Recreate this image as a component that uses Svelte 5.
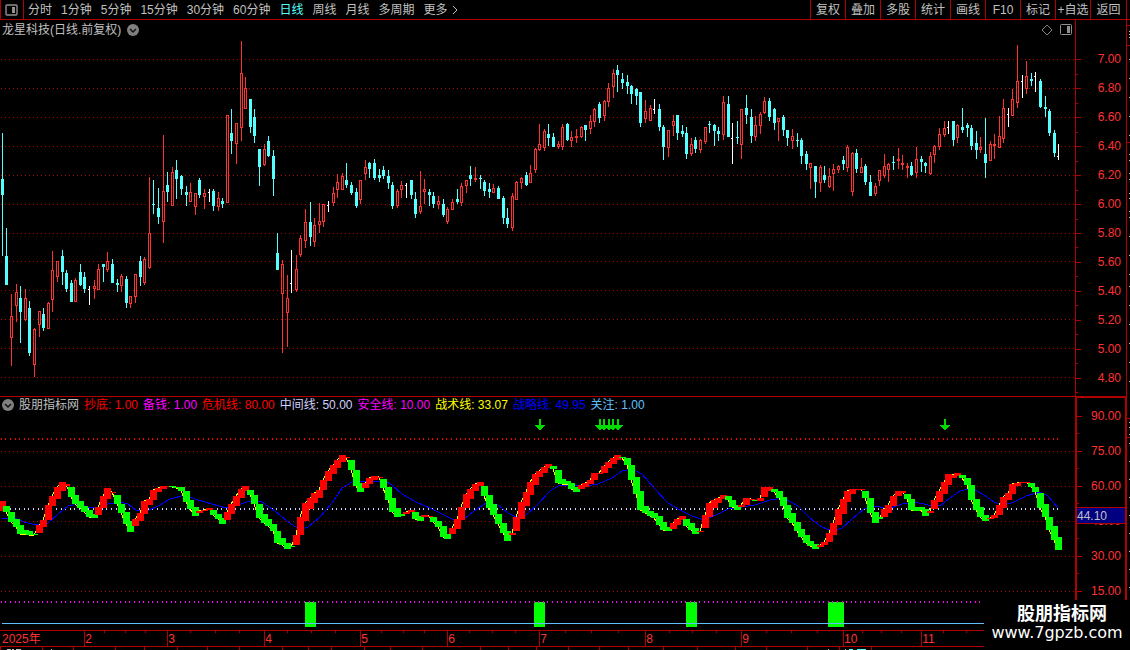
<script lang="ts">
  const PERIODS = ['分时', '1分钟', '5分钟', '15分钟', '30分钟', '60分钟', '日线', '周线', '月线', '多周期', '更多']
  const ACTIONS = ['复权', '叠加', '多股', '统计', '画线', 'F10', '标记', '+自选', '返回']

  let period = $state('日线')

  const PRICES = ['7.00', '6.80', '6.60', '6.40', '6.20', '6.00', '5.80', '5.60', '5.40', '5.20', '5.00', '4.80']
  const LEVELS = ['90.00', '75.00', '60.00', '45.00', '30.00', '15.00']

  const LEGEND = [
    { name: '抄底', value: '1.00', color: 'red' },
    { name: '备钱', value: '1.00', color: 'magenta' },
    { name: '危机线', value: '80.00', color: 'red' },
    { name: '中间线', value: '50.00', color: 'pale' },
    { name: '安全线', value: '10.00', color: 'magenta' },
    { name: '战术线', value: '33.07', color: 'yellow' },
    { name: '战略线', value: '49.95', color: 'blue' },
    { name: '关注', value: '1.00', color: 'sky' },
  ]

  const PRICE_GRID = [59, 88, 117, 146, 175, 204, 233, 261, 290, 319, 348, 377]
  const LEVEL_GRID = [451, 486, 521, 556, 591]

  // x, high, body top, body bottom, low, kind (r up, c down, w flat)
  const CANDLES = `
    2 133 179 195 256 c|6 228 256 285 285 c|11 294 316 338 366 r|16 284 292 306 322 r|20 286 298 312 343 c
    25 289 298 320 321 r|29 301 308 353 356 c|34 328 329 365 377 r|39 311 311 325 337 r|43 308 314 328 331 c
    48 302 303 329 329 r|52 251 270 300 312 r|57 261 261 277 282 r|62 250 256 272 285 c|66 270 273 289 292 c
    71 280 283 302 302 c|75 278 280 302 302 r|80 264 272 285 286 c|84 272 277 289 293 c|89 286 289 290 305 w
    94 280 286 289 299 r|98 264 269 290 290 r|103 264 264 267 282 c|107 252 261 270 272 r|112 259 264 283 283 c
    117 279 283 285 292 c|121 274 276 286 292 r|126 276 279 303 308 c|130 296 296 304 308 r|135 274 274 297 303 r
    140 256 261 277 286 c|144 257 259 283 285 r|149 177 233 268 269 r|153 180 204 205 214 c|158 188 208 217 224 c
    163 135 191 222 243 r|167 172 185 192 202 c|172 167 172 206 206 r|176 160 170 179 199 c|181 175 176 189 195 c
    186 186 192 195 206 c|190 183 192 202 202 r|195 193 193 207 215 r|199 178 180 195 198 c|204 189 193 197 209 r
    209 189 192 193 202 w|213 189 191 206 211 c|218 192 198 207 211 r|222 198 201 204 208 c|227 115 115 203 203 r
    231 109 133 141 154 c|236 123 123 144 164 r|241 41 73 128 141 r|245 77 88 109 109 r|250 99 99 127 133 c
    254 109 117 136 143 c|259 149 149 167 186 c|264 144 149 165 166 r|268 136 141 156 157 c|273 150 156 179 196 c
    277 233 253 270 270 c|282 260 264 294 353 r|287 275 298 313 347 r|291 250 283 284 293 w|296 255 269 290 292 r
    300 235 238 255 257 r|305 209 222 241 248 r|310 202 222 237 246 c|314 218 225 242 247 r|319 203 221 225 233 r
    323 204 204 222 227 r|328 201 205 206 212 w|333 187 193 203 206 r|337 174 182 190 198 r|342 173 176 190 190 r
    346 163 180 185 188 c|351 182 185 193 195 c|356 188 192 206 208 c|360 180 180 200 204 r|365 160 167 174 180 r
    369 162 163 169 178 c|374 159 163 178 180 c|379 169 175 178 182 c|383 166 170 176 179 c|388 170 176 183 189 c
    392 182 185 206 209 c|397 189 191 206 208 r|401 181 185 190 198 r|406 183 185 186 198 w|411 180 180 195 199 c
    415 192 199 214 218 c|420 171 206 212 214 r|424 179 189 192 204 r|429 189 192 195 206 c|433 192 196 204 208 c
    438 196 201 205 209 r|443 199 204 215 217 c|447 207 209 222 224 r|452 199 202 210 210 r|457 189 199 202 204 c
    461 183 186 203 206 r|466 180 180 186 193 r|470 166 175 179 186 c|475 167 178 180 182 r|480 175 178 179 189 c
    484 180 182 191 196 c|489 183 189 192 198 c|493 184 188 193 193 r|498 186 188 199 199 c|503 196 198 218 224 c
    507 208 218 224 228 c|512 193 196 228 231 r|516 181 182 200 200 r|521 177 178 183 189 r|526 172 175 185 186 c
    530 165 173 183 183 r|535 148 149 170 173 r|539 124 144 150 151 r|544 129 131 148 151 r|548 124 134 138 146 c
    553 133 137 147 147 c|558 141 144 147 149 r|562 124 127 147 150 r|567 123 124 140 141 c|571 131 137 141 147 r
    576 129 136 138 143 r|581 126 127 137 138 r|585 125 125 130 141 c|590 115 121 129 134 r|594 108 109 122 127 r
    599 102 104 118 123 c|604 100 101 116 121 r|608 83 88 102 107 r|613 69 73 87 98 r|617 65 70 75 92 c
    622 73 79 83 89 c|627 75 82 86 94 c|631 85 86 94 104 c|636 88 89 96 105 c|640 92 92 123 127 c
    645 100 111 119 123 r|650 105 108 121 121 r|654 99 109 110 114 w|659 104 109 127 131 c|663 125 127 147 160 c
    668 130 130 148 157 r|673 115 121 126 136 r|677 115 115 133 140 c|682 125 131 134 137 c|686 127 133 154 159 c
    691 138 144 154 156 r|695 137 140 149 153 c|700 139 140 150 153 r|705 127 127 142 144 r|709 121 124 125 133 c
    714 124 125 131 146 c|718 127 131 134 141 c|723 96 102 135 140 r|728 96 104 137 137 c|732 123 138 139 164 w
    737 121 137 138 144 c|741 109 109 145 159 r|746 95 108 115 124 c|751 109 117 136 143 c|755 116 125 137 141 r
    760 112 114 126 134 r|764 97 101 113 114 r|769 98 101 117 121 c|774 108 109 123 130 c|778 118 118 122 141 r
    783 115 117 130 136 c|787 130 130 138 146 c|792 129 136 141 149 r|797 133 140 141 147 c|801 138 140 156 164 c
    806 151 154 164 170 c|810 163 163 168 189 r|815 166 166 182 198 c|820 165 167 183 192 r|824 166 175 180 183 c
    829 168 176 187 188 r|833 164 169 174 191 r|838 165 166 170 173 r|843 156 160 164 170 c|847 145 147 168 172 r
    852 152 153 192 196 r|856 149 153 169 173 c|861 158 167 173 173 r|865 164 166 182 185 c|870 175 182 196 196 c
    875 183 186 194 196 r|879 170 170 181 186 r|884 154 166 176 178 r|888 163 164 170 182 r|893 156 162 163 170 c
    898 148 159 161 169 r|902 155 163 165 170 r|907 163 166 168 178 r|911 162 166 175 176 c|916 147 159 173 178 r
    921 156 159 162 172 c|925 162 163 166 173 c|930 152 156 174 175 r|934 145 146 155 163 r|939 128 134 147 150 r
    944 121 128 135 137 r|948 121 127 128 134 w|953 121 121 140 146 c|957 124 125 138 143 r|962 108 127 130 133 c
    967 123 125 128 137 c|971 125 128 146 150 c|976 131 143 150 159 c|980 137 147 150 153 r|985 118 154 163 178 c
    990 141 144 161 161 r|994 134 144 146 159 r|999 116 136 148 148 r|1003 99 108 139 143 r|1008 108 114 115 127 w
    1012 89 99 116 116 r|1017 45 81 103 108 r|1022 75 81 82 98 w|1026 61 76 89 94 r|1031 73 79 81 86 c
    1035 72 76 77 92 w|1040 79 81 107 108 c|1045 96 107 109 117 c|1049 109 111 133 136 c|1054 130 133 153 157 c
    1058 144 156 157 160 w`
    .trim()
    .split(/[|\n]/)
    .map((row) => {
      const parts = row.trim().split(' ')
      const [x, high, top, bottom, low] = parts.map(Number)
      return { x, high, top, bottom, low, kind: parts[5] }
    })

  // x, start, end of each oscillator step
  const STEPS = `
    2 511 501|6 506 512|11 512 522|16 519 527|20 525 534|25 530 534|29 531 535|34 534 535|39 533 525|43 527 520
    48 520 505|52 506 496|57 499 487|62 491 482|66 486 484|71 487 497|75 495 504|80 501 508|84 506 512|89 510 517
    94 514 518|98 515 507|103 508 496|107 499 488|112 493 492|117 495 504|121 504 513|126 512 524|130 521 532|135 526 519
    140 521 513|144 514 501|149 505 499|153 500 490|158 492 488|163 489 486|167 487 486|172 486 487|176 487 488|181 487 491
    186 491 502|190 500 509|195 507 516|199 513 511|204 511 510|209 510 508|213 510 515|218 514 519|222 518 524|227 520 512
    231 514 504|236 506 496|241 498 489|245 491 486|250 490 495|254 495 504|259 504 518|264 514 523|268 519 526|273 524 531
    277 531 543|282 538 545|287 543 549|291 546 547|296 545 535|300 535 517|305 521 503|310 509 498|314 503 493|319 498 490
    323 490 480|328 481 471|333 474 465|337 468 460|342 462 455|346 458 457|351 460 470|356 470 486|360 483 492|365 488 483
    369 484 478|374 480 476|379 478 477|383 479 488|388 487 500|392 498 512|397 508 517|401 514 516|406 514 512|411 512 510
    415 512 519|420 516 521|424 517 515|429 517 516|433 517 522|438 521 527|443 526 537|447 534 539|452 534 528|457 529 519
    461 520 507|466 508 494|470 499 489|475 491 484|480 486 482|484 486 496|489 495 508|493 504 515|498 514 524|503 523 533
    507 531 541|512 535 533|516 531 517|521 519 502|526 506 492|530 495 482|535 485 474|539 477 471|544 473 467|548 468 464
    553 466 469|558 470 483|562 479 484|567 481 484|571 483 489|576 487 492|581 489 485|585 487 483|590 484 480|594 480 473
    599 474 473|604 473 466|608 468 462|613 464 458|617 460 455|622 457 458|627 458 465|631 465 480|636 477 494|640 491 510
    645 506 513|650 511 516|654 513 518|659 516 525|663 522 530|668 527 531|673 529 523|677 525 519|682 520 516|686 519 526
    691 523 530|695 528 534|700 532 531|705 528 515|709 517 503|714 508 500|718 503 498|723 499 495|728 496 500|732 500 507
    737 505 510|741 507 505|746 505 498|751 500 499|755 500 501|760 501 498|764 497 487|769 491 487|774 489 492|779 491 498
    783 497 506|787 505 518|792 513 523|797 522 531|801 529 537|806 535 543|810 541 546|815 544 549|820 547 545|824 545 542
    829 542 533|833 535 523|838 525 509|843 514 499|847 502 491|852 494 489|856 490 489|861 490 489|865 491 498|870 498 513
    875 512 523|879 517 519|884 517 509|888 513 505|893 506 496|898 496 491|902 493 491|907 494 499|911 499 510|916 507 511
    921 507 510|925 509 516|930 513 511|934 509 500|939 502 491|944 494 482|948 485 474|953 478 475|957 476 473|962 475 478
    967 478 485|971 485 500|976 499 510|980 507 517|985 515 521|990 519 518|994 518 515|999 515 505|1003 508 497|1008 500 493
    1012 494 484|1017 486 483|1022 483 482|1026 483 482|1031 483 487|1035 487 492|1040 493 508|1045 504 517|1049 517 530|1054 526 540
    1058 537 550`
    .trim()
    .split(/[|\n]/)
    .map((row) => {
      const [x, from, to] = row.trim().split(' ').map(Number)
      return { x, from, to }
    })

  const TACTIC = STEPS.map((s) => `${s.x},${s.to}`).join(' ')
  const STRATEGY =
    '2,519 15,518 24,522 36,525 48,523 58,514 68,506 78,504 88,507 98,508 108,504 120,502 128,504 136,510 147,511 158,506 170,499 185,495 198,500 212,504 226,508 238,505 250,501 262,502 275,511 287,521 300,530 308,527 320,517 332,503 342,488 352,482 366,481 385,481 392,485 402,494 416,502 432,509 444,515 452,519 464,519 474,511 486,503 498,505 508,513 516,517 526,515 538,504 550,491 560,485 572,485 586,486 598,484 612,478 622,471 632,469 642,474 654,488 668,503 680,510 692,516 704,520 716,515 728,509 742,507 755,505 770,500 784,498 798,506 810,518 822,527 832,531 842,528 852,519 864,509 876,506 888,509 902,504 915,502 928,505 940,506 950,498 960,491 972,488 984,495 994,502 1004,505 1014,502 1026,496 1040,492 1048,496 1058,508'

  const ARROWS = [540, 600, 604, 609, 613, 618, 945]
  const SIGNALS = [
    { x: 305, w: 11 },
    { x: 534, w: 11 },
    { x: 686, w: 11 },
    { x: 828, w: 16 },
  ]

  const MONTHS = [
    { label: '2025年', width: 83 },
    { label: '2', width: 83 },
    { label: '3', width: 97 },
    { label: '4', width: 96 },
    { label: '5', width: 87 },
    { label: '6', width: 92 },
    { label: '7', width: 106 },
    { label: '8', width: 96 },
    { label: '9', width: 102 },
    { label: '10', width: 78 },
    { label: '11', width: 210 },
  ]
  const WEEKS = [104, 125, 145, 190, 215, 239, 287, 311, 335, 381, 403, 424, 469, 492, 515, 565, 591, 618, 669, 692, 716, 766, 791, 817, 862, 881, 901, 943, 966]
  const FOOT_TICKS = [0, 42, 73, 115, 144, 177, 207, 239, 282, 308, 331, 364, 390, 422, 480, 508, 536, 568, 599, 628, 663, 697, 735, 766, 807, 839, 871]

  // marks of the neighbouring pane that show at the right edge
  const EDGE_TOP = [31, 34, 37, 59, 78, 97, 116, 135, 154, 160, 173, 179, 193, 198, 211, 217, 236, 255, 274, 286, 305, 324, 343, 362, 381]
  const EDGE_BOTTOM = [422, 427, 434, 443, 461, 479, 497, 515, 533, 551, 569, 587]
</script>

<div class="terminal">
  <header class="toolbar">
    <button class="layout-btn" aria-label="布局">
      <svg width="14" height="12" viewBox="0 0 14 12">
        <rect x="1" y="1" width="11" height="10" rx="1" fill="none" stroke="#909090" stroke-width="1.4" />
        <rect x="7" y="3" width="3" height="6" fill="#909090" />
      </svg>
    </button>
    <nav class="periods">
      {#each PERIODS as name}
        <button class:active={name === period} onclick={() => (period = name)}>
          {name}{#if name === '更多'}<svg class="chevron" width="6" height="10" viewBox="0 0 6 10"><path d="M1 1 L5 5 L1 9" fill="none" stroke="#c0c0c0" /></svg>{/if}
        </button>
      {/each}
    </nav>
    <div class="actions">
      {#each ACTIONS as name}
        <button>{name}</button>
      {/each}
    </div>
  </header>

  <section class="panel price-panel">
    <div class="plot">
      <div class="title">
        <h1>龙星科技(日线.前复权)</h1>
        <button class="round" aria-label="展开">
          <svg width="12" height="12" viewBox="0 0 12 12">
            <circle cx="6" cy="6" r="6" fill="#808080" />
            <path d="M3 5 L6 8 L9 5" fill="none" stroke="#101010" stroke-width="1.5" />
          </svg>
        </button>
        <div class="tools">
          <button aria-label="标注">
            <svg width="12" height="12" viewBox="0 0 12 12">
              <path d="M6 1 L11 6 L6 11 L1 6 Z" fill="none" stroke="#808080" />
            </svg>
          </button>
          <button aria-label="侧栏">
            <svg width="12" height="12" viewBox="0 0 12 12">
              <rect x="0.5" y="0.5" width="11" height="10" rx="1" fill="none" stroke="#909090" />
              <rect x="7" y="2" width="3" height="7" fill="#909090" />
            </svg>
          </button>
        </div>
      </div>
      <svg class="chart" viewBox="0 40 1075 356" preserveAspectRatio="none" shape-rendering="crispEdges">
        {#each PRICE_GRID as y}
          <line class="grid" x1="1" x2="1075" y1={y + 0.5} y2={y + 0.5} />
        {/each}
        {#each CANDLES as { x, high, top, bottom, low, kind }}
          {#if kind === 'c'}
            <rect class="down" {x} y={high} width="1" height={low - high} />
            <rect class="down" x={x - 1} y={top} width="3" height={bottom - top} />
          {:else if kind === 'w'}
            <rect class="flat" {x} y={high} width="1" height={low - high} />
            <rect class="flat" x={x - 1} y={top} width="1" height="1" />
          {:else}
            <rect class="up" {x} y={high} width="1" height={top - high} />
            <rect class="up" {x} y={bottom} width="1" height={low - bottom} />
            <rect class="up" x={x - 1} y={top} width="3" height={bottom - top} />
            <rect class="hole" {x} y={top + 1} width="1" height={Math.max(0, bottom - top - 2)} />
          {/if}
        {/each}
      </svg>
    </div>
    <ol class="axis">
      {#each PRICES as label}
        <li>{label}</li>
      {/each}
    </ol>
    <svg class="edge" viewBox="0 20 3 376" preserveAspectRatio="none" shape-rendering="crispEdges">
      {#each [25, 45, 142] as y}
        <rect class="edge-line" x="0" {y} width="3" height="1" />
      {/each}
      {#each EDGE_TOP as y}
        <rect class="edge-mark" x="2" {y} width="1" height="1" />
      {/each}
    </svg>
  </section>

  <section class="panel level-panel">
    <div class="plot">
      <div class="legend">
        <button class="round" aria-label="展开指标">
          <svg width="12" height="12" viewBox="0 0 12 12">
            <circle cx="6" cy="6" r="6" fill="#808080" />
            <path d="M3 5 L6 8 L9 5" fill="none" stroke="#101010" stroke-width="1.5" />
          </svg>
        </button>
        <h2>股朋指标网</h2>
        {#each LEGEND as { name, value, color }}
          <span class={color}>{name}: {value}</span>
        {/each}
      </div>
      <svg class="chart" viewBox="0 414 1075 216" preserveAspectRatio="none" shape-rendering="crispEdges">
        {#each LEVEL_GRID as y}
          <line class="grid" x1="1" x2="1075" y1={y + 0.5} y2={y + 0.5} />
        {/each}
        {#each SIGNALS as { x, w }}
          <rect class="green-fill" {x} y="602" width={w} height="25" />
        {/each}
        {#each CANDLES as { x }}
          <rect class="danger-dot" x={x - 1} y="438" width="1" height="2" />
          <rect class="middle-dot" x={x - 1} y="508" width="1" height="2" />
          <rect class="safe-dot" x={x - 1} y="601" width="1" height="2" />
        {/each}
        <line class="watch" x1="2" x2="1059" y1="623.5" y2="623.5" />
        <polyline class="strategy" points={STRATEGY} />
        <polyline class="tactic" points={TACTIC} />
        {#each STEPS as { x, from, to }}
          <rect
            class={to < from ? 'red-fill' : 'green-fill'}
            x={x - 3}
            y={Math.min(from, to)}
            width="7"
            height={Math.abs(from - to)}
          />
        {/each}
        {#each ARROWS as x}
          <path class="arrow" d="M{x - 1} 419 h2 v6 h4 l-5 6 l-5 -6 h4 z" />
        {/each}
      </svg>
    </div>
    <ol class="axis">
      {#each LEVELS as label}
        <li>{label}</li>
      {/each}
      <li class="cursor-value">44.10</li>
    </ol>
    <svg class="edge" viewBox="0 396 3 234" preserveAspectRatio="none" shape-rendering="crispEdges">
      {#each [418, 437] as y}
        <rect class="edge-line" x="0" {y} width="3" height="1" />
      {/each}
      {#each EDGE_BOTTOM as y}
        <rect class="edge-mark" x="2" {y} width="1" height="1" />
      {/each}
    </svg>
  </section>

  <footer>
    <div class="months">
      {#each MONTHS as { label, width }}
        <span style="flex-grow: {width}">{label}</span>
      {/each}
      <svg class="weeks" viewBox="0 0 1130 3" preserveAspectRatio="none" shape-rendering="crispEdges">
        {#each WEEKS as x}
          <rect {x} y="0" width="1" height="2" />
        {/each}
      </svg>
    </div>
    <svg class="foot" viewBox="0 0 1130 3" preserveAspectRatio="none" shape-rendering="crispEdges">
      {#each FOOT_TICKS as x}
        <rect {x} y="0" width="1" height="3" />
      {/each}
      <path d="M7 2h4v1h-4z M12 2h2v1h-2z M16 2h5v1h-5z M51 2h1v1h-1z M828 2h1v1h-1z M845 2h1v1h-1z" fill="#c0c0c0" />
      <path d="M849 2h4v1h-4z M857 2h9v1h-9z" fill="#54ffff" />
    </svg>
  </footer>

  <a class="brand" href="http://www.7gpzb.com">
    <strong>股朋指标网</strong>
    <span>www.7gpzb.com</span>
  </a>
</div>

<style>
  :global(body) {
    margin: 0;
    background: #000;
  }

  .terminal {
    position: relative;
    display: flex;
    flex-direction: column;
    min-height: 100vh;
    overflow: hidden;
    background: #000;
    color: #c0c0c0;
    font-family: 'Liberation Sans', 'Noto Sans CJK SC', sans-serif;
    font-size: 12px;
    line-height: 16px;
  }

  button {
    padding: 0;
    border: none;
    background: none;
    color: inherit;
    font: inherit;
    white-space: nowrap;
    cursor: pointer;
  }

  svg {
    display: block;
  }

  h1,
  h2 {
    margin: 0;
    font-size: 12px;
    font-weight: normal;
  }

  /* toolbar */
  .toolbar {
    display: flex;
    flex: none;
    height: 19px;
    padding-right: 3px;
    border-bottom: 1px solid #b00000;
  }

  .layout-btn {
    display: flex;
    align-items: center;
    justify-content: center;
    width: 24px;
    border: solid #b00000;
    border-width: 0 1px;
  }

  .periods {
    display: flex;
    gap: 9px;
    padding-left: 4px;
  }

  .periods button {
    display: flex;
    align-items: center;
  }

  .periods .active {
    color: #54ffff;
  }

  .chevron {
    margin-left: 4px;
  }

  .actions {
    display: flex;
    margin-left: auto;
    border-right: 1px solid #b00000;
  }

  .actions button {
    width: 35px;
    border-left: 1px solid #b00000;
  }

  .actions button:last-child {
    width: 36px;
  }

  /* panels */
  .panel {
    display: flex;
    min-height: 0;
  }

  .price-panel {
    flex: 376 0 0;
  }

  .level-panel {
    flex: 234 0 0;
  }

  .plot {
    display: flex;
    flex: 1;
    flex-direction: column;
    min-width: 0;
  }

  .chart {
    flex: 1;
    width: 100%;
    min-height: 0;
  }

  .edge {
    width: 3px;
    height: 100%;
  }

  .title {
    display: flex;
    align-items: center;
    height: 20px;
    gap: 6px;
    padding: 0 3px 0 2px;
    box-sizing: border-box;
  }

  .tools {
    display: flex;
    gap: 7px;
    margin-left: auto;
  }

  .legend {
    display: flex;
    align-items: center;
    height: 18px;
    gap: 5px;
    padding: 0 0 2px 2px;
    border-top: 1px solid #b00000;
    box-sizing: border-box;
    white-space: nowrap;
  }

  .red { color: #ff0000; }
  .magenta { color: #ff00ff; }
  .pale { color: #d0d0ff; }
  .yellow { color: #ffff00; }
  .blue { color: #0000ff; }
  .sky { color: #60c0ff; }

  /* axes */
  .axis {
    position: relative;
    display: flex;
    flex-direction: column;
    width: 52px;
    margin: 0;
    padding: 25px 0 4px;
    border: solid #b00000;
    border-width: 0 1px;
    box-sizing: border-box;
    list-style: none;
    color: #ff3232;
  }

  .axis li {
    position: relative;
    display: flex;
    flex: 1;
    align-items: center;
    justify-content: flex-end;
    padding-right: 5px;
  }

  .axis li::before,
  .axis li::after {
    content: '';
    position: absolute;
    left: 0;
    top: 50%;
    width: 5px;
    height: 1px;
    background: #b00000;
  }

  .axis li::after {
    top: 100%;
    width: 2px;
  }

  .level-panel .axis {
    padding: 0 0 22px;
    border-width: 2px 2px 0;
  }

  .level-panel .axis li {
    padding-right: 4px;
  }

  .level-panel .axis .cursor-value {
    position: absolute;
    top: 47%;
    left: 0;
    right: 0;
    height: 15px;
    border: solid #b00000;
    border-width: 1px 0;
    background: #000080;
    color: #c0c0c0;
    justify-content: flex-start;
  }

  .axis .cursor-value::before,
  .axis .cursor-value::after {
    display: none;
  }

  /* chart marks */
  .grid {
    stroke: #b00000;
    stroke-dasharray: 1 3;
  }

  .up { fill: #ff3232; }
  .down { fill: #54ffff; }
  .flat { fill: #fff; }
  .hole { fill: #000; }
  .red-fill { fill: #ff0000; }
  .green-fill { fill: #00ff00; }
  .danger-dot { fill: #ff0000; }
  .middle-dot { fill: #d0d0ff; }
  .safe-dot { fill: #ff00ff; }
  .arrow { fill: #00dc00; }
  .edge-line { fill: #b00000; }
  .edge-mark { fill: #c0c0c0; }

  .watch {
    stroke: #60c0ff;
  }

  .strategy {
    fill: none;
    stroke: #0000ff;
  }

  .tactic {
    fill: none;
    stroke: #ffff00;
  }

  /* dates */
  footer {
    flex: none;
  }

  .months {
    position: relative;
    display: flex;
    height: 15px;
    border: solid #b00000;
    border-width: 1px 0;
    color: #ff3232;
  }

  .months span {
    flex-basis: 0;
    border-left: 1px solid #b00000;
    box-sizing: border-box;
    min-width: 0;
    white-space: nowrap;
  }

  .months span:first-child {
    padding-left: 2px;
    border-left: none;
  }

  .weeks {
    position: absolute;
    left: 0;
    top: 0;
    width: 100%;
    height: 3px;
    fill: #b00000;
  }

  .foot {
    width: 100%;
    height: 3px;
    fill: #b00000;
  }

  .brand {
    position: absolute;
    right: 0;
    bottom: 0;
    display: flex;
    flex-direction: column;
    align-items: center;
    width: 146px;
    height: 50px;
    padding-top: 4px;
    box-sizing: border-box;
    background: #000;
    color: #fff;
    text-decoration: none;
  }

  .brand strong {
    padding-left: 10px;
    font-size: 18px;
    line-height: 20px;
  }

  .brand span {
    font-family: 'DejaVu Sans', sans-serif;
    font-size: 16px;
    line-height: 18px;
  }
</style>
